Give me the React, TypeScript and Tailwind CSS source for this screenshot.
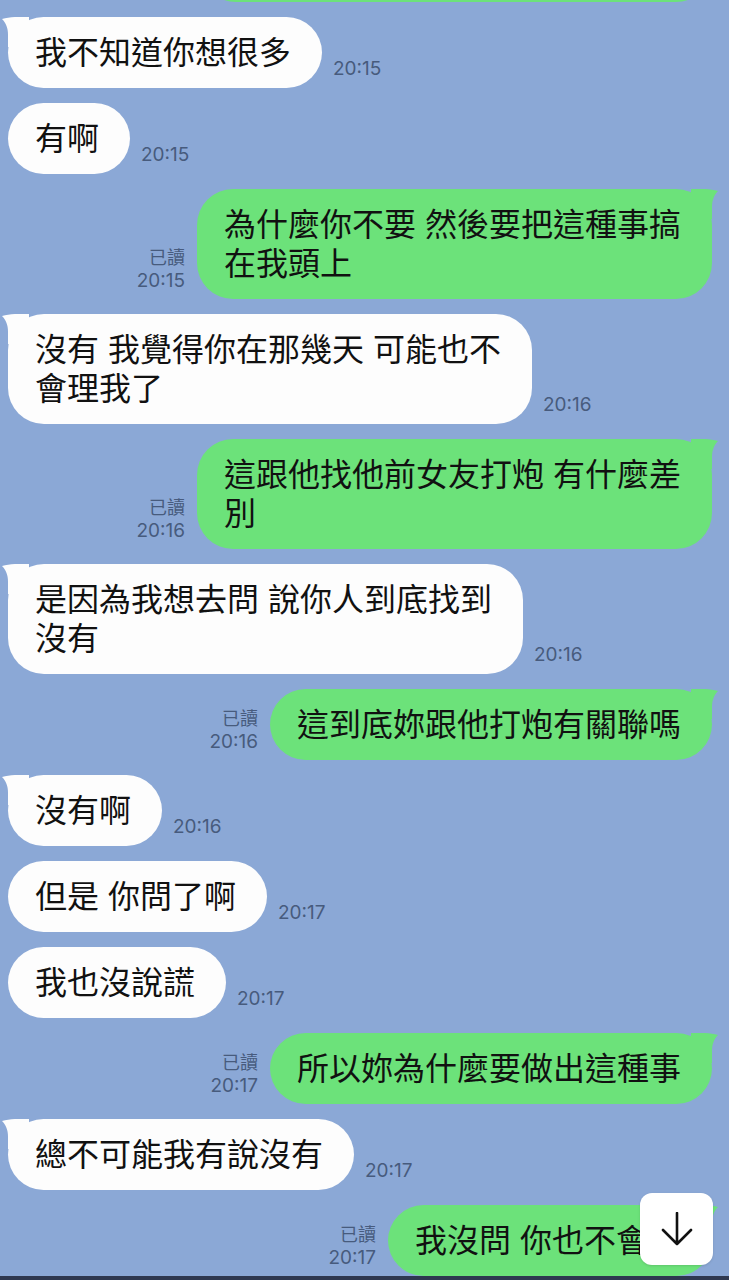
import React from "react";

type Msg = {
  side: "l" | "r";
  text: string[];
  time: string;
  tail?: boolean;
  cut?: boolean;
};

// lines are split the way the app wraps them
const messages: Msg[] = [
  { side: "l", text: ["我不知道你想很多"], time: "20:15", tail: true },
  { side: "l", text: ["有啊"], time: "20:15" },
  { side: "r", text: ["為什麼你不要 然後要把這種事搞", "在我頭上"], time: "20:15", tail: true },
  { side: "l", text: ["沒有 我覺得你在那幾天 可能也不", "會理我了"], time: "20:16", tail: true },
  { side: "r", text: ["這跟他找他前女友打炮 有什麼差", "別"], time: "20:16", tail: true },
  { side: "l", text: ["是因為我想去問 說你人到底找到", "沒有"], time: "20:16", tail: true },
  { side: "r", text: ["這到底妳跟他打炮有關聯嗎"], time: "20:16", tail: true },
  { side: "l", text: ["沒有啊"], time: "20:16", tail: true },
  { side: "l", text: ["但是 你問了啊"], time: "20:17" },
  { side: "l", text: ["我也沒說謊"], time: "20:17" },
  { side: "r", text: ["所以妳為什麼要做出這種事"], time: "20:17", tail: true },
  { side: "l", text: ["總不可能我有說沒有"], time: "20:17", tail: true },
  { side: "r", text: ["我沒問 你也不會"], time: "20:17", tail: true, cut: true },
];

const font = { fontFamily: 'Inter, "Noto Sans CJK TC", sans-serif' };

function Tail({ side }: { side: "l" | "r" }) {
  if (side === "l") {
    return (
      <svg className="absolute top-0 left-[-7px]" width="28" height="30" viewBox="0 0 28 30">
        <path d="M28 0 H14 C9 0 5 1 1 2 C5 6 7 11 7 18 V30 H28 Z" fill="#fdfdfd" />
      </svg>
    );
  }
  return (
    <svg className="absolute top-0 right-[-7px]" width="28" height="30" viewBox="0 0 28 30">
      <path d="M0 0 H14 C19 0 23 1 27 2 C23 6 21 11 21 18 V30 H0 Z" fill="#6ce27a" />
    </svg>
  );
}

function Bubble({ m }: { m: Msg }) {
  const color = m.side === "l" ? "bg-[#fdfdfd]" : "bg-[#6ce27a]";
  return (
    <div
      className={`relative rounded-[36px] ${color} py-[16px] pl-[27px] ${
        m.cut ? "pr-[64px]" : "pr-[31px]"
      } whitespace-nowrap text-[32px] leading-[39px] text-[#111]`}
      style={font}
    >
      {m.tail && <Tail side={m.side} />}
      <div className="relative flex flex-col">
        {m.text.map((t, i) => (
          <span key={i}>{t}</span>
        ))}
      </div>
    </div>
  );
}

function Row({ m }: { m: Msg }) {
  if (m.side === "l") {
    return (
      <div className="flex items-end pl-[8px]">
        <Bubble m={m} />
        <span
          className="ml-[11px] mb-[8px] shrink-0 text-[19px] leading-[22px] text-[#475b7d]"
          style={font}
        >
          {m.time}
        </span>
      </div>
    );
  }
  return (
    <div className="flex items-end justify-end pr-[17px]">
      <div className="mr-[12px] mb-[7px] flex shrink-0 flex-col items-end text-[#475b7d]">
        <span className="text-[18px] leading-[22px]" style={font}>
          已讀
        </span>
        <span className="text-[19px] leading-[23px]" style={font}>
          {m.time}
        </span>
      </div>
      <Bubble m={m} />
    </div>
  );
}

export default function App() {
  return (
    <div className="relative flex h-[1280px] w-[729px] flex-col overflow-hidden bg-[#8ba8d6]">
      <div className="flex min-h-0 flex-1 flex-col gap-[15px] overflow-hidden">
        <div className="flex justify-end pr-[17px]">
          <div className="-mt-[108px] h-[110px] w-[512px] rounded-[36px] bg-[#6ce27a]" />
        </div>
        {messages.map((m, i) => (
          <Row key={i} m={m} />
        ))}
      </div>
      <div className="h-[4px] shrink-0 bg-[#2e3850]" />

      <button className="absolute bottom-[15px] right-[16px] flex h-[72px] w-[73px] items-center justify-center rounded-[12px] bg-white shadow-sm">
        <svg width="32" height="34" viewBox="0 0 32 34" fill="none">
          <path
            d="M16 1 V32 M2 18 L16 32 L30 18"
            stroke="#111"
            strokeWidth="2.6"
            strokeLinecap="round"
            strokeLinejoin="round"
          />
        </svg>
      </button>
    </div>
  );
}
